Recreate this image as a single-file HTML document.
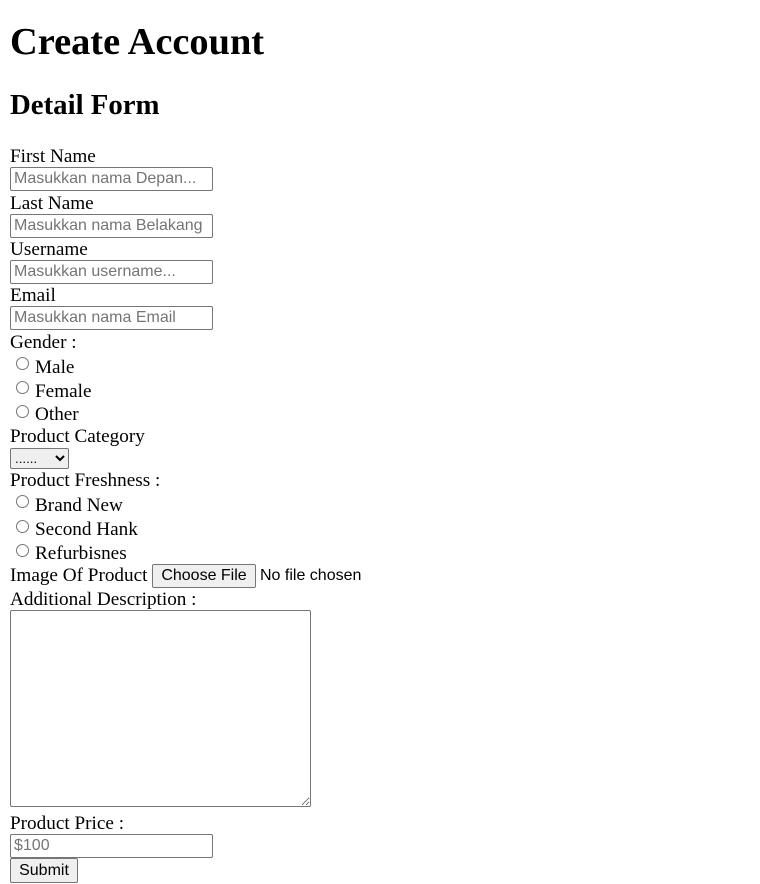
<!DOCTYPE html>
<html><head><meta charset="utf-8">
<style>
body{margin:0;font-family:"Liberation Serif",serif;font-size:19.2px;color:#000;background:#fff;position:relative;width:760px;height:884px;overflow:hidden}
.a{position:absolute;white-space:nowrap;line-height:22px;margin-top:1px}
h1,h2{position:absolute;margin:0;left:10px;font-weight:bold;white-space:nowrap}
h1{font-size:38.4px;top:20px;line-height:44px}
h2{font-size:28.8px;top:88px;line-height:34px}
input,select,button,textarea{position:absolute;margin:0;font-family:"Liberation Sans",sans-serif;font-size:16px;box-sizing:border-box}
.t{left:10px;width:203px;height:24px;padding:1px 3px;border:1px solid #767676;border-radius:2px}
.t::placeholder{color:#757575}
input[type=radio]{width:13px;height:13px;left:16px}
.r{left:35px}
textarea{left:10px;top:610px;width:301px;height:197px;border:1px solid #767676;border-radius:2px}
button{border:1px solid #767676;border-radius:2px;background:#efefef;padding:0 8px;line-height:20px}
</style></head><body>
<h1>Create Account</h1>
<h2>Detail Form</h2>
<div class="a" style="left:10px;top:145px">First Name</div>
<input class="t" style="top:167px" placeholder="Masukkan nama Depan...">
<div class="a" style="left:10px;top:192px">Last Name</div>
<input class="t" style="top:214px" placeholder="Masukkan nama Belakang">
<div class="a" style="left:10px;top:238px">Username</div>
<input class="t" style="top:260px" placeholder="Masukkan username...">
<div class="a" style="left:10px;top:284px">Email</div>
<input class="t" style="top:306px" placeholder="Masukkan nama Email">
<div class="a" style="left:10px;top:331px">Gender :</div>
<input type="radio" name="g" style="top:357px"><div class="a r" style="top:356px">Male</div>
<input type="radio" name="g" style="top:381px"><div class="a r" style="top:380px">Female</div>
<input type="radio" name="g" style="top:405px"><div class="a r" style="top:403px">Other</div>
<div class="a" style="left:10px;top:425px">Product Category</div>
<select style="left:10px;top:448px;width:59px;height:21px;font-size:13.33px;border:1px solid #767676;border-radius:2px"><option>......</option></select>
<div class="a" style="left:10px;top:469px">Product Freshness :</div>
<input type="radio" name="f" style="top:495px"><div class="a r" style="top:494px">Brand New</div>
<input type="radio" name="f" style="top:520px"><div class="a r" style="top:518px">Second Hank</div>
<input type="radio" name="f" style="top:544px"><div class="a r" style="top:542px">Refurbisnes</div>
<div class="a" style="left:10px;top:564px">Image Of Product</div>
<button type="button" style="left:152px;top:564px;width:104px;height:24px">Choose File</button>
<div class="a" style="left:260px;top:564px;font-family:'Liberation Sans',sans-serif;font-size:16px">No file chosen</div>
<div class="a" style="left:10px;top:588px">Additional Description :</div>
<textarea></textarea>
<div class="a" style="left:10px;top:812px">Product Price :</div>
<input class="t" style="top:834px" placeholder="$100">
<button type="button" style="left:10px;top:858px;width:68px;height:25px">Submit</button>
</body></html>
